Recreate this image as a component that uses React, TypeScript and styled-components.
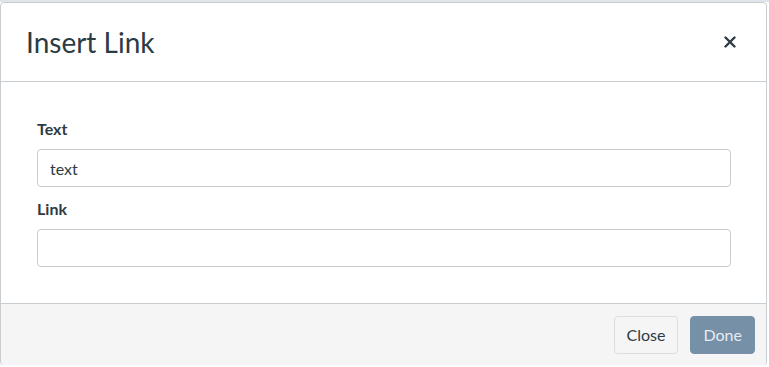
import React from "react";
import styled, { createGlobalStyle } from "styled-components";

const GlobalStyle = createGlobalStyle`
  html, body {
    margin: 0;
    padding: 0;
    background: #ffffff;
  }
  body {
    font-family: Lato, "Liberation Sans", sans-serif;
    color: #2d3b45;
  }
`;

const Page = styled.main`
  padding-top: 2px;
  width: 769px;
  height: 365px;
  box-sizing: border-box;
  background: linear-gradient(to bottom, #dfe5ea 0, #dfe5ea 2px, #ffffff 2px);
`;

const Dialog = styled.section`
  display: flex;
  flex-direction: column;
  width: 767px;
  height: 364px;
  box-sizing: border-box;
  background: #ffffff;
  border: 1px solid #c7cdd1;
  border-radius: 4px;
  overflow: hidden;
`;

const Header = styled.header`
  display: flex;
  align-items: center;
  justify-content: space-between;
  height: 78px;
  padding: 0 26px 0 25px;
  border-bottom: 1px solid #c7cdd1;
`;

const Title = styled.h1`
  margin: 0;
  font: 400 28px Lato, sans-serif;
  color: #2d3b45;
`;

const CloseIcon = styled.button`
  display: flex;
  align-items: center;
  justify-content: center;
  width: 20px;
  height: 20px;
  padding: 0;
  border: none;
  background: transparent;
  color: #2d3b45;
  cursor: pointer;
`;

const Body = styled.div`
  flex: 1;
  display: flex;
  flex-direction: column;
  padding: 37px 35px 0 36px;
`;

const Label = styled.label`
  display: block;
  font: 700 16px Lato, sans-serif;
  color: #2d3b45;
  margin-bottom: 11px;
`;

const Input = styled.input`
  display: block;
  width: 100%;
  height: 38px;
  box-sizing: border-box;
  padding: 0 12px;
  margin-bottom: 12px;
  font: 400 16px Lato, sans-serif;
  color: #2d3b45;
  background: #ffffff;
  border: 1px solid #c7cdd1;
  border-radius: 4px;
  outline: none;
`;

const Footer = styled.footer`
  display: flex;
  justify-content: flex-end;
  align-items: center;
  gap: 12px;
  height: 61px;
  padding: 0 11px 0 0;
  background: #f5f5f5;
  border-top: 1px solid #c7cdd1;
`;

const Button = styled.button<{ $primary?: boolean }>`
  height: 38px;
  padding: 0 12px;
  font: 400 16px Lato, sans-serif;
  border-radius: 4px;
  border: 1px solid ${(p) => (p.$primary ? "#7690a7" : "#dadee1")};
  background: ${(p) => (p.$primary ? "#7690a7" : "#f5f5f5")};
  color: ${(p) => (p.$primary ? "#e6ebf0" : "#2d3b45")};
  cursor: pointer;
`;

export default function App() {
  return (
    <>
      <GlobalStyle />
      <Page>
        <Dialog>
          <Header>
            <Title>Insert Link</Title>
            <CloseIcon aria-label="Close">
              <svg width="12" height="12" viewBox="0 0 12 12">
                <path
                  d="M1.5 1.5 L10.5 10.5 M10.5 1.5 L1.5 10.5"
                  stroke="currentColor"
                  strokeWidth="2.4"
                  strokeLinecap="round"
                />
              </svg>
            </CloseIcon>
          </Header>
          <Body>
            <Label>Text</Label>
            <Input defaultValue="text" />
            <Label>Link</Label>
            <Input defaultValue="" />
          </Body>
          <Footer>
            <Button>Close</Button>
            <Button $primary>Done</Button>
          </Footer>
        </Dialog>
      </Page>
    </>
  );
}
